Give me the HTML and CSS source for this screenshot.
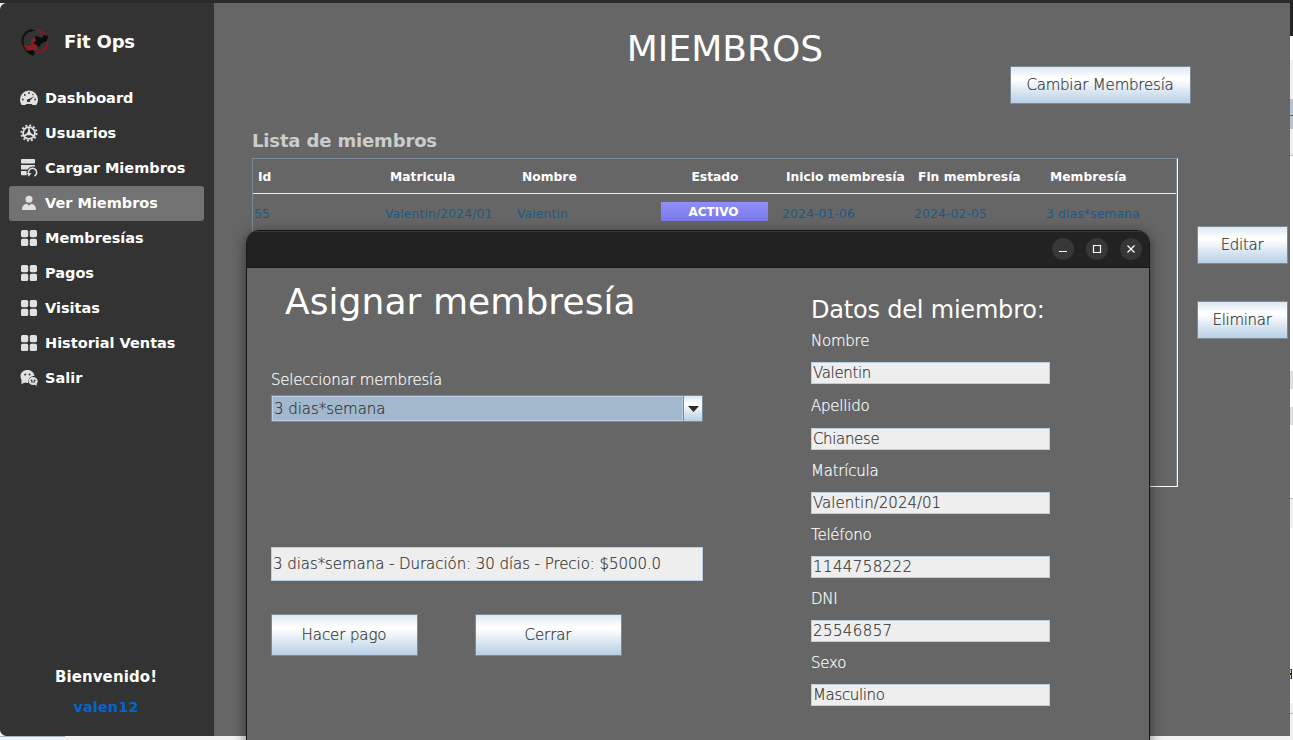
FILE: index.html
```html
<!DOCTYPE html>
<html lang="es">
<head>
<meta charset="utf-8">
<title>Fit Ops</title>
<link rel="stylesheet" href="styles.css">
</head>
<body>
<svg class="defs" width="0" height="0">
  <symbol id="grid" viewBox="0 0 16 16"><rect x="0" y="0" width="7.2" height="7.2" rx="1.6"/><rect x="8.8" y="0" width="7.2" height="7.2" rx="1.6"/><rect x="0" y="8.8" width="7.2" height="7.2" rx="1.6"/><rect x="8.8" y="8.8" width="7.2" height="7.2" rx="1.6"/></symbol>
</svg>
<div class="desktop">
  <div class="app">
    <aside class="sidebar">
      <div class="brand">
        <svg class="logo" viewBox="0 0 28 28">
          <path d="M11 2C5 3 1 8 1.500 14c.2 3 1.500 5 3 6.500" fill="none" stroke="#111" stroke-width="1.800"/>
          <path d="M4 4l6-2.500 4 .8-6 2z" fill="#111"/>
          <path d="M16 0l4 2.500 5 3 2 6 .5 6-3 5-6 2.500-4-.5 5-1.500 4-3 2-4-.3-5-2-5-4-1-3-2z" fill="#811c24"/>
          <path d="M14 11c-1-3 2-4 4-2l3 1 2-3 4 1-1 5-5 2-3 4-5 1-3-3 1-4z" fill="#0b0b0b"/>
          <path d="M10 12l4-3 1 4-3 2 5 3-1 3 2 2-4-1-4 1-4-1-4-5 5 1 3-1z" fill="#8c1d26"/>
          <path d="M3 21l4 2 5-1 2 3-2 3-5-3z" fill="#0b0b0b"/>
        </svg>
        <span>Fit Ops</span>
      </div>
      <nav class="menu">
        <a class="item"><svg class="icon" viewBox="0 0 18 18"><path d="M9 1.500a9 8.800 0 0 0-9 9c0 2 .7 3.900 1.700 5.500h3.800l.8-1h5.400l.8 1h3.800c1-1.600 1.700-3.500 1.700-5.500a9 8.800 0 0 0-9-9z"/><g fill="#333"><circle cx="9" cy="4" r=".9"/><circle cx="4.800" cy="6" r=".9"/><circle cx="13" cy="5.500" r=".7"/><circle cx="2.800" cy="10.500" r=".9"/><circle cx="15.200" cy="10.500" r=".9"/><path d="M14.500 7.300l-4.300 4a1.700 1.700 0 1 1-1.300-1.300z"/></g></svg>Dashboard</a>
        <a class="item"><svg class="icon" viewBox="0 0 18 18"><circle cx="9" cy="9" r="7.600" fill="none" stroke="#e1e1e1" stroke-width="1.800" stroke-dasharray="2 1.979"/><circle cx="9" cy="9" r="5.900" fill="none" stroke="#e1e1e1" stroke-width="1.900"/><path d="M9 3v6M9 9l-5 3M9 9l5 3" stroke="#e1e1e1" stroke-width="1.500"/><path d="M9 5l3 6.300H6z"/></svg>Usuarios</a>
        <a class="item"><svg class="icon" viewBox="0 0 18 18"><rect x="1" y="0" width="14" height="4.500" rx="1"/><path d="M1 6h14v1.700c-3-.5-6 .3-7.500 2.800H1zM1 12h5.500l.3 4.200H2a1 1 0 0 1-1-1z"/><path d="M9 15.500A4.100 4.100 0 1 1 14.500 17" fill="none" stroke="#e1e1e1" stroke-width="1.600"/><path d="M7 14h4.500L8.800 17.800z"/></svg>Cargar Miembros</a>
        <a class="item active"><svg class="icon" viewBox="0 0 18 18"><circle cx="9" cy="5.300" r="3.500"/><path d="M2 16c0-3.500 1.500-5.500 4.500-6.200L9 11.500l2.500-1.700C14.500 10.500 16 12.500 16 16z"/></svg>Ver Miembros</a>
        <a class="item"><svg class="icon small"><use href="#grid"/></svg>Membresías</a>
        <a class="item"><svg class="icon small"><use href="#grid"/></svg>Pagos</a>
        <a class="item"><svg class="icon small"><use href="#grid"/></svg>Visitas</a>
        <a class="item"><svg class="icon small"><use href="#grid"/></svg>Historial Ventas</a>
        <a class="item"><svg class="icon" viewBox="0 0 18 18"><path d="M7.500 1C3.500 1 .5 3.600.5 7c0 1.900 1 3.500 1 4.600L1.500 15l3.700-1.400c1 .3 2 .4 3 .3C7.800 9.500 10.800 7 14.500 7 14 3.500 11.200 1 7.500 1z"/><path d="M13 8c-2.700 0-4.500 1.800-4.500 4s2 4 4.700 4l1.500-.3 2.300 1.200-.5-2c.8-.8 1.200-1.800 1.200-2.900 0-2.300-2-4-4.700-4z"/><g fill="#333"><circle cx="5.200" cy="5.400" r="1"/><circle cx="9.500" cy="5.400" r="1"/><circle cx="11.500" cy="11.300" r=".9"/><circle cx="14.700" cy="11.300" r=".9"/><rect x="11" y="12.500" width="4" height="1"/></g></svg>Salir</a>
      </nav>
      <div class="welcome"><p>Bienvenido!</p><p class="user">valen12</p></div>
    </aside>
    <main class="main">
      <h1 class="title">MIEMBROS</h1>
      <div class="toolbar"><button class="btn change">Cambiar Membresía</button></div>
      <h2 class="subtitle">Lista de miembros</h2>
      <div class="content">
        <section class="table">
          <div class="row head"><span>Id</span><span>Matricula</span><span>Nombre</span><span class="center">Estado</span><span>Inicio membresía</span><span>Fin membresía</span><span>Membresía</span></div>
          <div class="row data"><span>55</span><span>Valentin/2024/01</span><span>Valentin</span><span class="status">ACTIVO</span><span>2024-01-06</span><span>2024-02-05</span><span>3 dias*semana</span></div>
        </section>
        <div class="actions"><button class="btn">Editar</button><button class="btn">Eliminar</button></div>
      </div>
    </main>
  </div>
  <div class="behind"><i class="chevron"></i><i class="mark"></i></div>
</div>
<div class="dialog">
  <header class="bar">
    <span class="ctl"><svg viewBox="0 0 22 22"><path d="M7 13.500h8"/></svg></span>
    <span class="ctl"><svg viewBox="0 0 22 22"><path d="M7.500 7.500h7v7h-7z"/></svg></span>
    <span class="ctl"><svg viewBox="0 0 22 22"><path d="M7.500 7.500l7 7M14.500 7.500l-7 7"/></svg></span>
  </header>
  <div class="body">
    <section class="assign">
      <h2 class="heading">Asignar membresía</h2>
      <label class="label">Seleccionar membresía</label>
      <div class="select"><span>3 dias*semana</span><span class="arrow"><svg width="11" height="6"><path d="M0 0h11L5.500 6z" fill="#2b2b2b"/></svg></span></div>
      <div class="field summary">3 dias*semana - Duración: 30 días - Precio: $5000.0</div>
      <div class="buttons"><button class="btn">Hacer pago</button><button class="btn">Cerrar</button></div>
    </section>
    <section class="details">
      <h3 class="dheading">Datos del miembro:</h3>
      <label class="label first">Nombre</label><div class="field">Valentin</div>
      <label class="label second">Apellido</label><div class="field">Chianese</div>
      <label class="label">Matrícula</label><div class="field code">Valentin/2024/01</div>
      <label class="label">Teléfono</label><div class="field num">1144758222</div>
      <label class="label">DNI</label><div class="field num">25546857</div>
      <label class="label">Sexo</label><div class="field">Masculino</div>
    </section>
  </div>
</div>
</body>
</html>
```
FILE: styles.css
```css
* { box-sizing: border-box; }
body { margin: 0; width: 1293px; height: 740px; overflow: hidden; position: relative; background: #f2f2f2; font-family: "DejaVu Sans", sans-serif; }
h1, h2, h3, p { margin: 0; font-weight: 400; }
.defs { position: absolute; }
.desktop { display: grid; grid-template-columns: 1290px 3px; height: 740px; border-top: 3px solid #2b2b2b; background: linear-gradient(90deg, #a9b7c5 65px, #f2f2f2 65px) 0 733px / 100% 1px no-repeat #f2f2f2; }
.app { display: flex; height: 733px; border-radius: 7px 0 0 7px; overflow: hidden; background: #666; }
.behind { position: relative; overflow: hidden; margin-top: -3px; background: linear-gradient(#242424 36px, #fff 36px 60px, #f0f0f0 60px 99px, #b8c4d0 99px 129px, #f0f0f0 129px 155px, #bbb 155px 156px, #fff 156px 371px, #dfdfdf 371px 389px, #fff 389px 407px, #dfdfdf 407px 425px, #fff 425px 498px, #bbb 498px 499px, #f0f0f0 499px 528px, #fff 528px 703px, #f0f0f0 703px 713px, #bbb 713px 714px, #f0f0f0 714px); }
.chevron { position: absolute; left: 0; top: 115px; width: 3px; height: 1px; background: #566270; }
.mark { position: absolute; left: 0; top: 669px; width: 2px; height: 10px; background: linear-gradient(#3a78b0 1px, #e8c890 1px 4px, #2a2030 4px 6px, #e8c890 6px 9px, #3a78b0 9px); border-right: 1px solid #203080; }

.sidebar { width: 214px; background: #333; color: #fff; display: flex; flex-direction: column; font-weight: 700; }
.brand { display: flex; align-items: center; gap: 15px; height: 28px; margin: 25px 0 0 21px; font-size: 18px; letter-spacing: -.2px; }
.brand span { padding-bottom: 2px; }
.logo { width: 28px; height: 28px; }
.menu { margin: 25px 10px 0 9px; }
.item { display: flex; align-items: center; height: 35px; padding: 0 0 1px 11px; gap: 7px; font-size: 14.500px; letter-spacing: 0; border-radius: 3px; }
.active { background: #727272; }
.icon { width: 18px; height: 18px; fill: #e1e1e1; overflow: visible; }
.icon.small { width: 16px; height: 16px; margin: 0 1px; }
.welcome { margin-top: auto; padding: 0 2px 17px 0; text-align: center; font-size: 15px; line-height: 24px; }
.welcome p { height: 30px; font-weight: 700; letter-spacing: .1px; }
.welcome .user { color: #06c; height: 24px; font-size: 14.500px; }

.main { flex: 1; }
.title { padding: 25px 54px 0 0; height: 63px; text-align: center; font-size: 36px; line-height: 42px; color: #fff; }
.toolbar { display: flex; padding-left: 796px; }
.btn { border: 1px solid #7a8a99; background: linear-gradient(#dde8f3, #fff 30%, #fff 34%, #b8cfe5); color: #333; font: 200 15px "DejaVu Sans", sans-serif; padding: 0 1px 0 0; letter-spacing: -.1px; }
.btn, .label, .field, .select { -webkit-text-stroke: .2px currentColor; }
.change { width: 181px; height: 38px; letter-spacing: -.2px; }
.subtitle { margin: 26px 0 0 38px; height: 28px; line-height: 22px; font-size: 18px; font-weight: 700; letter-spacing: -.15px; color: #ccc; }
.content { display: flex; padding-left: 38px; }
.table { width: 926px; height: 329px; border: 1px solid #7a8a99; border-right: 1px solid #fff; border-bottom-color: #fff; box-shadow: inset -1px 0 #7a8a99; }
.row { display: grid; grid-template-columns: repeat(7, 132px); }
.row span { white-space: nowrap; }
.head { height: 35px; margin-right: 1px; border-bottom: 1px solid #eee; padding-left: 5px; line-height: 36px; color: #fff; font-weight: 700; font-size: 12.300px; }
.center { text-align: center; padding-right: 10px; }
.data { padding-left: 1px; line-height: 40px; color: #195a8a; font-size: 12.300px; letter-spacing: .15px; }
.data span:nth-child(2), .data span:nth-child(3) { margin-left: -1px; }
.row .status { height: 19px; margin: 8px 14px 0 11px; text-align: center; color: #fff; background: linear-gradient(#8f8ff8, #7a7aec); font-weight: 700; line-height: 21px; font-size: 12px; letter-spacing: 0; padding-right: 2px; }
.actions { display: flex; flex-direction: column; gap: 37px; padding: 68px 0 0 19px; }
.actions .btn { width: 91px; height: 38px; letter-spacing: -.3px; }

.dialog { position: absolute; left: 246px; top: 230px; width: 904px; height: 530px; border: 1px solid #171717; border-radius: 13px 13px 0 0; background: #666; box-shadow: 0 3px 14px rgba(0,0,0,.5); overflow: hidden; }
.bar { display: flex; justify-content: flex-end; align-items: center; gap: 12px; height: 37px; padding: 0 7px 1px 0; background: #222; border-top: 1px solid #383838; border-bottom: 1px solid #171717; }
.ctl { width: 22px; height: 22px; border-radius: 50%; background: #373737; }
.ctl svg { display: block; width: 22px; height: 22px; fill: none; stroke: #fff; stroke-width: 1.200; }
.body { display: grid; grid-template-columns: 564px 240px; }
.assign { padding-left: 24px; }
.heading { margin: 13px 0 0 14px; height: 88px; line-height: 42px; font-size: 36px; letter-spacing: .07px; color: #fff; }
.label { display: block; height: 26px; font: 200 15px/23px "DejaVu Sans", sans-serif; letter-spacing: -.23px; color: #fff; }
.select { display: flex; width: 432px; height: 27px; border: 1px solid #7a8a99; background: #a3b8cc; font: 200 15px/24px "DejaVu Sans", sans-serif; color: #333; }
.select > span:first-child { flex: 1; border: 1px solid #b8cfe5; padding-left: 1px; letter-spacing: -.05px; }
.arrow { width: 19px; border-left: 1px solid #7a8a99; display: flex; align-items: center; justify-content: center; background: linear-gradient(#dde8f3, #fff 30%, #b8cfe5); }
.field { width: 239px; height: 22px; margin-top: 1px; padding-left: 1px; border: 1px solid #b8cfe5; background: #eee; font: 200 15px/20px "DejaVu Sans", sans-serif; letter-spacing: -.35px; color: #333; white-space: nowrap; }
.code { letter-spacing: 0; }
.num { letter-spacing: .4px; }
.summary { width: 432px; height: 34px; margin-top: 125px; line-height: 33px; letter-spacing: -.06px; }
.buttons { display: flex; gap: 57px; margin-top: 33px; }
.buttons .btn { width: 147px; height: 42px; }
.dheading { height: 62px; padding-top: 28px; line-height: 29px; font-size: 24px; letter-spacing: -.2px; color: #fff; white-space: nowrap; }
.details .label { height: 41px; padding-top: 10px; }
.details .label.first { height: 31px; padding-top: 0; }
.details .label.second { height: 43px; padding-top: 11px; }
```
